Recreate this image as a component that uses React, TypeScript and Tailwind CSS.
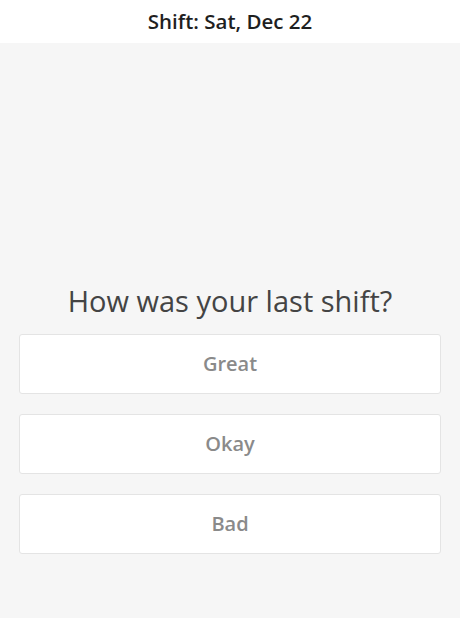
const options = ["Great", "Okay", "Bad"];

export default function App() {
  return (
    <div
      className="flex h-[618px] w-full flex-col bg-[#f6f6f6]"
      style={{ fontFamily: '"Open Sans", "Noto Sans", sans-serif' }}
    >
      <header className="flex h-[43px] items-center justify-center bg-white">
        <h1 className="text-[20.5px] font-semibold text-[#1f1f1f]">Shift: Sat, Dec 22</h1>
      </header>

      <main className="flex flex-col px-[19px] pt-[238px]">
        <h2 className="mb-[13px] text-center text-[29px] leading-[40px] text-[#444]">
          How was your last shift?
        </h2>
        <div className="flex flex-col gap-[20px]">
          {options.map((option) => (
            <button
              key={option}
              className="h-[60px] w-full rounded-[3px] border border-[#e4e4e4] bg-white text-[20px] font-semibold text-[#8a8a8a]"
            >
              {option}
            </button>
          ))}
        </div>
      </main>
    </div>
  );
}
